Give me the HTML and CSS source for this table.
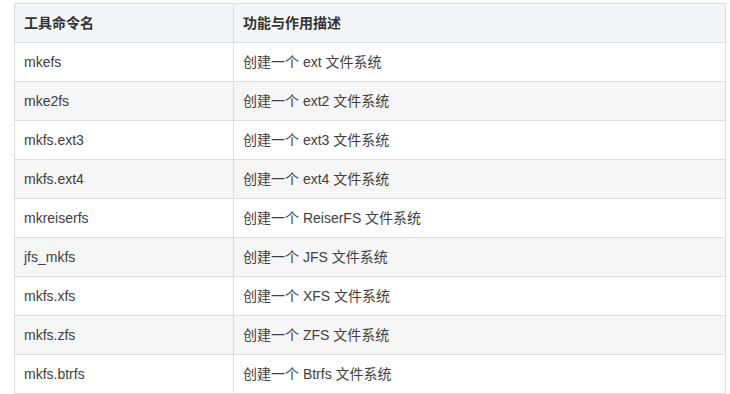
FILE: index.html
```html
<!DOCTYPE html>
<html lang="zh-CN">
<head>
<meta charset="utf-8">
<link rel="stylesheet" href="styles.css">
</head>
<body>
<table class="tools">
  <thead>
    <tr><th class="c1">工具命令名</th><th>功能与作用描述</th></tr>
  </thead>
  <tbody>
    <tr><td>mkefs</td><td>创建一个 ext 文件系统</td></tr>
    <tr><td>mke2fs</td><td>创建一个 ext2 文件系统</td></tr>
    <tr><td>mkfs.ext3</td><td>创建一个 ext3 文件系统</td></tr>
    <tr><td>mkfs.ext4</td><td>创建一个 ext4 文件系统</td></tr>
    <tr><td>mkreiserfs</td><td>创建一个 ReiserFS 文件系统</td></tr>
    <tr><td>jfs_mkfs</td><td>创建一个 JFS 文件系统</td></tr>
    <tr><td>mkfs.xfs</td><td>创建一个 XFS 文件系统</td></tr>
    <tr><td>mkfs.zfs</td><td>创建一个 ZFS 文件系统</td></tr>
    <tr><td>mkfs.btrfs</td><td>创建一个 Btrfs 文件系统</td></tr>
  </tbody>
</table>
</body>
</html>
```
FILE: styles.css
```css
html, body {
  background: #ffffff;
}
body {
  margin: 3px 0 0 14px;
  font-family: "Liberation Sans", "Noto Sans CJK SC", Arial, sans-serif;
  font-size: 14px;
  color: #404040;
}
.tools {
  border-collapse: collapse;
  width: 712px;
  table-layout: fixed;
}
.tools th,
.tools td {
  border: 1px solid #dddddd;
  padding: 10px 9px;
  line-height: 18px;
  text-align: left;
  white-space: nowrap;
}
.tools th {
  background: #f3f5f6;
  font-weight: bold;
  color: #333333;
}
.tools .c1 {
  width: 200px;
}
.tools tbody tr:nth-child(even) td {
  background: #f6f6f6;
}
```
